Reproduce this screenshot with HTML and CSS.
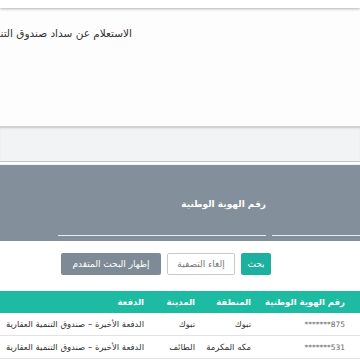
FILE: index.html
```html
<!DOCTYPE html>
<html lang="ar" dir="rtl">
<head>
    <meta charset="UTF-8">
    <meta name="viewport" content="width=device-width, initial-scale=1.0">
    <title>الاستعلام عن سداد صندوق التنمية العقارية</title>
    <link rel="stylesheet" href="styles.css">
</head>
<body>
    <div class="top-strip"></div>

    <section class="title-card">
        <h1 class="page-title">الاستعلام عن سداد صندوق التنمية العقارية</h1>
    </section>

    <div class="grey-band"></div>

    <section class="filter-panel">
        <div class="field field-first">
            <label class="field-label">&nbsp;</label>
            <div class="field-line"></div>
        </div>
        <div class="field field-second">
            <label class="field-label">رقم الهوية الوطنية</label>
            <div class="field-line"></div>
        </div>
    </section>

    <div class="actions">
        <button type="button" class="btn btn-search">بحث</button>
        <button type="button" class="btn btn-clear">إلغاء التصفية</button>
        <button type="button" class="btn btn-advanced">إظهار البحث المتقدم</button>
    </div>

    <table class="results">
        <colgroup>
            <col class="col-id">
            <col class="col-region">
            <col class="col-city">
            <col>
        </colgroup>
        <thead>
            <tr>
                <th>رقم الهوية الوطنية</th>
                <th>المنطقة</th>
                <th>المدينة</th>
                <th>الدفعة</th>
            </tr>
        </thead>
        <tbody>
            <tr>
                <td class="masked"><bdi dir="ltr">*******875</bdi></td>
                <td>تبوك</td>
                <td>تبوك</td>
                <td>الدفعة الأخيرة – صندوق التنمية العقارية</td>
            </tr>
            <tr>
                <td class="masked"><bdi dir="ltr">*******531</bdi></td>
                <td>مكه المكرمة</td>
                <td>الطائف</td>
                <td>الدفعة الأخيرة – صندوق التنمية العقارية</td>
            </tr>
        </tbody>
    </table>
</body>
</html>
```

FILE: styles.css
```css
body {
    font-family: "DejaVu Sans", "Noto Sans", sans-serif;
    margin: 0;
    background-color: #fff;
    color: #333;
    width: 360px;
    overflow: hidden;
}

.top-strip {
    height: 8px;
    background-color: #fff;
    box-shadow: 0 1px 3px rgba(0,0,0,0.3);
    position: relative;
}

.title-card {
    height: 120px;
    background-color: #fdfdfd;
    padding-right: 228px;
    overflow: hidden;
    box-sizing: border-box;
    border-bottom: 2px solid #d2d2d2;
}
.page-title {
    margin: 0;
    padding-top: 19px;
    font-size: 10.5px;
    font-weight: normal;
    color: #333;
    white-space: nowrap;
}

.grey-band {
    height: 33px;
    background-color: #f2f3f4;
    border-bottom: 1px solid #bfc4c9;
    box-shadow: inset 0 1px 2px rgba(0,0,0,0.06);
}

.filter-panel {
    margin-top: 2px;
    height: 77px;
    background-color: #838f9a;
    display: flex;
    gap: 6px;
    padding-top: 32px;
    box-sizing: border-box;
    border-top: 1px solid #eef1f4;
}
.field {
    flex-shrink: 0;
}
.field-first {
    width: 88px;
}
.field-second {
    width: 208px;
}
.field-label {
    display: block;
    height: 14px;
    font-size: 9px;
    font-weight: bold;
    color: #fff;
    line-height: 14px;
}
.field-line {
    margin-top: 24px;
    height: 1px;
    background-color: #e6ebef;
}

.actions {
    display: flex;
    gap: 6px;
    padding: 12px 89px 0 0;
}
.btn {
    height: 22px;
    padding: 0;
    font-family: "DejaVu Sans", sans-serif;
    font-size: 9px;
    border-radius: 2px;
    border: 1px solid transparent;
    cursor: pointer;
}
.btn-search {
    width: 30px;
    background-color: #1cb09e;
    color: #fff;
}
.btn-clear {
    width: 68px;
    background-color: #fff;
    border-color: #c8c8c8;
    color: #777;
}
.btn-advanced {
    width: 100px;
    background-color: #7e8b96;
    color: #fff;
}

.results {
    margin-top: 16px;
    width: 360px;
    border-collapse: collapse;
    table-layout: fixed;
    font-size: 8.5px;
}
.col-id { width: 94px; }
.col-region { width: 56px; }
.col-city { width: 51px; }
.results th,
.results td {
    text-align: right;
    padding: 0 15px 0 0;
    white-space: nowrap;
}
.results th {
    height: 22px;
    background-color: #1cbba2;
    color: #fff;
    font-weight: bold;
}
.results td {
    height: 22px;
    color: #333;
    border-bottom: 1px solid #e2e2e2;
}
.results td.masked {
    color: #666;
    font-size: 7.5px;
}
```
